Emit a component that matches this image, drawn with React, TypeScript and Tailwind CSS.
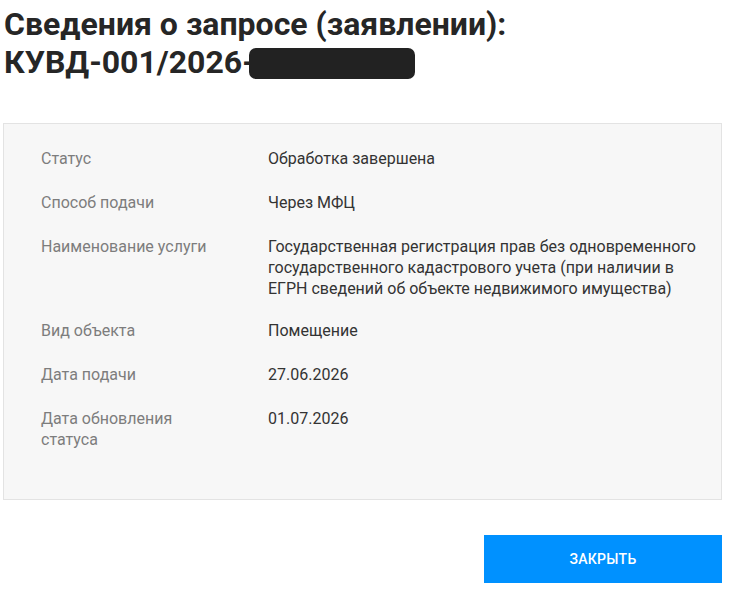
import React from "react";

const rows: { label: string; value: string; mb: string }[] = [
  { label: "Статус", value: "Обработка завершена", mb: "mb-[23px]" },
  { label: "Способ подачи", value: "Через МФЦ", mb: "mb-[23px]" },
  {
    label: "Наименование услуги",
    value:
      "Государственная регистрация прав без одновременного государственного кадастрового учета (при наличии в ЕГРН сведений об объекте недвижимого имущества)",
    mb: "mb-[21px]",
  },
  { label: "Вид объекта", value: "Помещение", mb: "mb-[23px]" },
  { label: "Дата подачи", value: "27.06.2026", mb: "mb-[23px]" },
  { label: "Дата обновления статуса", value: "01.07.2026", mb: "mb-[23px]" },
];

export default function App() {
  return (
    <div
      className="w-[752px] h-[604px] bg-white pl-[3px] pr-[30px] pt-[5px]"
      style={{ fontFamily: "Roboto, 'Liberation Sans', sans-serif" }}
    >
      <h1 className="text-[32px] leading-[38px] font-bold text-[#262626] pl-[1px]">
        Сведения о запросе (заявлении):
        <br />
        КУВД-001/2026-
        <span className="inline-block align-middle w-[166px] h-[31px] bg-[#222222] rounded-[7px] ml-[-6px] mt-[-4px] translate-y-[1px]"></span>
      </h1>
      <div className="mt-[42px] border border-[#e3e3e3] bg-[#f7f7f7] pt-[24px] pb-[26px] pl-[37px] pr-[20px]">
        {rows.map((r) => (
          <div key={r.label} className={`flex text-[16px] leading-[21px] ${r.mb}`}>
            <div className="w-[227px] shrink-0 pr-[45px] text-[#7d7d7d]">{r.label}</div>
            <div className="flex-1 text-[#333333]">{r.value}</div>
          </div>
        ))}
      </div>
      <div className="flex justify-end mt-[35px]">
        <button className="w-[238px] h-[48px] bg-[#0091ff] text-white text-[14px] font-medium tracking-[0.3px] uppercase">
          Закрыть
        </button>
      </div>
    </div>
  );
}
